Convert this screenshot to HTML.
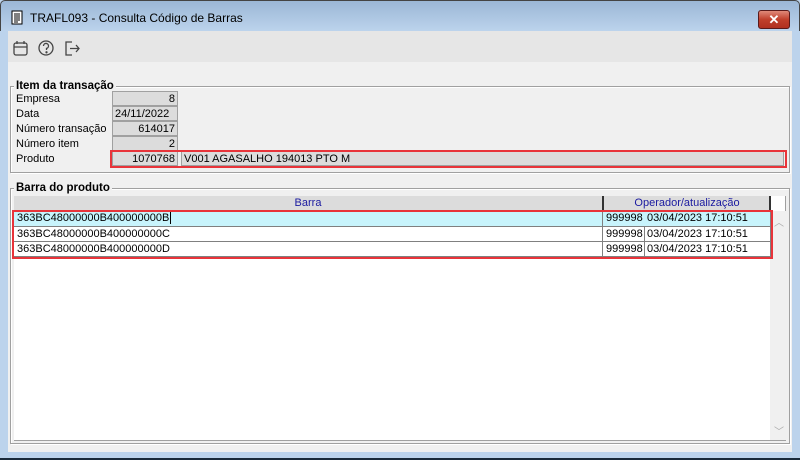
<!DOCTYPE html><html><head><meta charset="utf-8"><style>
*{margin:0;padding:0;box-sizing:border-box}
body{width:800px;height:460px;overflow:hidden;background:#bcd3ec;font-family:"Liberation Sans",sans-serif;font-size:11px;color:#000;position:relative}
.a{position:absolute}
.f{position:absolute;background:#dcdcdc;border:1px solid #a0a0a0;height:15px;line-height:14px;padding:0 2px;text-align:right}
.lb{position:absolute;left:16px;line-height:13px}
.c{position:absolute;line-height:15px;padding-left:3px;border-right:1px solid #808080;border-bottom:1px solid #808080}
</style></head><body>
<div class="a" style="left:0;top:0;width:800px;height:31px;background:linear-gradient(#9bb7d6,#bcd3ec);border:1px solid #444;border-bottom:none;border-radius:5px 5px 0 0"></div>
<svg class="a" style="left:11px;top:10px" width="13" height="15"><rect x="1" y="1" width="10" height="13" fill="#fff" stroke="#000"/><path d="M3 4h6M3 6h6M3 8h6M3 10h6M3 12h4" stroke="#000"/></svg>
<div class="a" style="left:30px;top:11px;font-size:12px;color:#000">TRAFL093 - Consulta Código de Barras</div>
<div class="a" style="left:758px;top:10px;width:32px;height:19px;border:1px solid #5a1a1a;border-radius:3px;background:linear-gradient(#e08a7a,#c0402c 50%,#b03020);color:#fff;font-weight:bold;font-size:13px;text-align:center;line-height:17px">✕</div>
<div class="a" style="left:8px;top:31px;width:784px;height:421px;background:#f0f0f0"></div>
<div class="a" style="left:8px;top:31px;width:784px;height:31px;background:#e6e6e6"></div>
<svg class="a" style="left:12px;top:40px" width="70" height="18" fill="none" stroke="#444" stroke-width="1.3">
<rect x="2" y="3" width="13" height="12" rx="2"/><path d="M2 7h13M5 1v3M12 1v3"/>
<circle cx="34" cy="8" r="7"/><path d="M31.5 6a2.5 2.5 0 1 1 3 2.4v1.6"/><circle cx="34.5" cy="12.3" r=".5" fill="#444"/>
<path d="M60 2h-6v13h6M58 8.5h9M64 5l3 3.5-3 3.5"/></svg>
<div class="a" style="left:10px;top:86px;width:780px;height:87px;border:1px solid #a0a0a0;box-shadow:inset 1px 1px #fff,1px 1px #fff"></div>
<div class="a" style="left:14px;top:80px;padding:0 2px;background:#f0f0f0;font-weight:bold;font-size:11.5px">Item da transação</div>
<div class="lb" style="top:93px">Empresa</div><div class="f" style="left:112px;top:91px;width:66px">8</div>
<div class="lb" style="top:108px">Data</div><div class="f" style="left:112px;top:106px;width:66px;text-align:left">24/11/2022</div>
<div class="lb" style="top:123px">Número transação</div><div class="f" style="left:112px;top:121px;width:66px">614017</div>
<div class="lb" style="top:138px">Número item</div><div class="f" style="left:112px;top:136px;width:66px">2</div>
<div class="lb" style="top:153px">Produto</div><div class="f" style="left:112px;top:151px;width:66px">1070768</div>
<div class="f" style="left:181px;top:151px;width:603px;text-align:left">V001 AGASALHO 194013 PTO M</div>
<div class="a" style="left:110px;top:150px;width:677px;height:18px;border:2px solid #e8343a"></div>
<div class="a" style="left:10px;top:188px;width:780px;height:256px;border:1px solid #a0a0a0;box-shadow:inset 1px 1px #fff,1px 1px #fff"></div>
<div class="a" style="left:14px;top:182px;padding:0 2px;background:#f0f0f0;font-weight:bold;font-size:11.5px">Barra do produto</div>
<div class="a" style="left:14px;top:196px;width:772px;height:245px;background:#fff;border-right:1px solid #a0a0a0;border-bottom:1px solid #a0a0a0"></div>
<div class="a" style="left:770px;top:211px;width:16px;height:229px;background:#f0f0f0"></div>
<div class="a" style="left:774px;top:214px;color:#aaa;font-size:10px">︿</div>
<div class="a" style="left:774px;top:423px;color:#aaa;font-size:10px">﹀</div>
<div class="a" style="left:14px;top:196px;width:756px;height:15px;background:#dcdcdc"></div>
<div class="a" style="left:14px;top:197px;width:588px;text-align:center;color:#1a1aa0;line-height:13px">Barra</div>
<div class="a" style="left:602px;top:196px;width:2px;height:15px;background:#333"></div>
<div class="a" style="left:604px;top:197px;width:166px;text-align:center;color:#1a1aa0;line-height:13px">Operador/atualização</div>
<div class="a" style="left:769px;top:196px;width:2px;height:15px;background:#333"></div>
<div class="c" style="left:14px;top:211px;width:589px;height:16px;background:#c8f4fc">363BC48000000B400000000B<span style="border-left:1px solid #000;margin-left:1px"></span></div>
<div class="c" style="left:603px;top:211px;width:42px;height:16px;background:#c8f4fc">999998</div>
<div class="c" style="left:644px;top:211px;width:127px;height:16px;background:#c8f4fc">03/04/2023 17:10:51</div>
<div class="c" style="left:14px;top:227px;width:589px;height:15px">363BC48000000B400000000C</div>
<div class="c" style="left:603px;top:227px;width:42px;height:15px">999998</div>
<div class="c" style="left:644px;top:227px;width:127px;height:15px">03/04/2023 17:10:51</div>
<div class="c" style="left:14px;top:242px;width:589px;height:15px">363BC48000000B400000000D</div>
<div class="c" style="left:603px;top:242px;width:42px;height:15px">999998</div>
<div class="c" style="left:644px;top:242px;width:127px;height:15px">03/04/2023 17:10:51</div>
<div class="a" style="left:12px;top:210px;width:761px;height:49px;border:2px solid #e8343a"></div>
<div class="a" style="left:0;top:458px;width:800px;height:2px;background:#1a2a3a"></div>
</body></html>
